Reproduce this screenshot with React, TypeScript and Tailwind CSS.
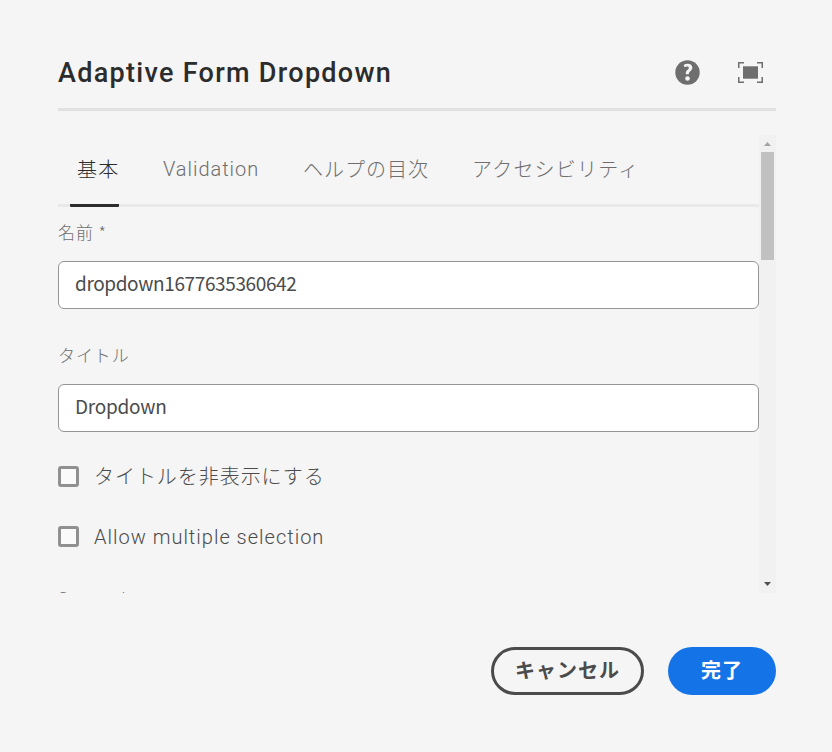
import React from 'react';

const jp = "font-['Noto_Sans_CJK_JP',sans-serif]";
const latin = "font-['Roboto','Noto_Sans_CJK_JP',sans-serif]";

function Tab({ children, className }: { children: React.ReactNode; className: string }) {
  return (
    <button className={`flex shrink-0 items-center whitespace-nowrap pb-[2px] text-[20px] font-light leading-[30px] ${className}`}>
      {children}
    </button>
  );
}

function TextField({ label, value, className }: { label: string; value: string; className: string }) {
  return (
    <div className="flex flex-col">
      <label className={`${jp} flex h-[27px] items-center whitespace-nowrap pb-[2px] text-[17px] font-light tracking-[0.9px] text-[#6e6e6e]`}>
        {label}
      </label>
      <div className={`${jp} mt-[15px] flex h-12 items-center rounded-[6px] border border-[#959595] bg-white pl-4 pb-1 text-[19px] text-[#4b4b4b]`}>
        <span className={className}>{value}</span>
      </div>
    </div>
  );
}

function Checkbox({ children, className }: { children: React.ReactNode; className: string }) {
  return (
    <label className="flex h-[21px] items-center">
      <span className="h-[21px] w-[21px] shrink-0 rounded-[3px] border-[3px] border-[#909090] bg-[#fafafa]" />
      <span className={`whitespace-nowrap text-[20px] font-light leading-[30px] text-[#4b4b4b] ${className}`}>{children}</span>
    </label>
  );
}

export default function App() {
  return (
    <main className="flex h-[752px] w-[832px] flex-col overflow-hidden bg-[#f5f5f5] pl-[58px] pr-14">
      <header className="flex h-[111px] shrink-0 items-center justify-between border-b-[3px] border-[#e1e1e1] pt-9">
        <h1 className={`${latin} whitespace-nowrap pt-[2px] text-[27px] font-medium leading-9 tracking-[1.29px] text-[#2c2c2c]`}>
          Adaptive Form Dropdown
        </h1>
        <div className="flex items-center gap-[38px] pr-[13px]">
          <svg width="25" height="25" viewBox="0 0 25 25" aria-label="Help">
            <circle cx="12.5" cy="12.5" r="12.2" fill="#6e6e6e" />
            <path d="M8.6 4.9C9.8 4.1 11.2 3.7 12.8 3.7c2.7 0 4.5 1.5 4.5 3.8 0 1.7-.8 2.7-2 3.7-1.1.9-1.5 1.5-1.4 3h-3c-.3-2 .2-3 1.4-4.1 1-.9 1.5-1.3 1.5-2.2 0-.9-.6-1.4-1.6-1.4-.9 0-1.8.3-2.6.8Z" fill="#f5f5f5" />
            <circle cx="12.5" cy="18.5" r="2.3" fill="#f5f5f5" />
          </svg>
          <svg width="25" height="21" viewBox="0 0 25 21" aria-label="Fullscreen">
            <path d="M.75 6V.75H6M19 .75h5.25V6M24.25 15v5.25H19M6 20.25H.75V15" fill="none" stroke="#6e6e6e" strokeWidth="1.5" />
            <path d="M5 4.3h15v12.4H5z" fill="#6e6e6e" />
          </svg>
        </div>
      </header>

      <section className="mt-6 flex h-[458px] shrink-0 overflow-hidden">
        <div className="flex w-[701px] flex-col">
          <nav className="flex h-[72px] shrink-0 border-b-[3px] border-[#e9e9e9]">
            <Tab className={`${jp} ml-3 h-[72px] w-[49px] rounded-b-[1px] border-b-[3px] border-[#2c2c2c] pl-[7px] tracking-[1.3px] text-[#2c2c2c]`}>基本</Tab>
            <Tab className={`${latin} ml-11 w-[97px] tracking-[0.95px] text-[#6e6e6e]`}>Validation</Tab>
            <Tab className={`${jp} ml-[43px] w-[126px] tracking-[1px] text-[#6e6e6e]`}>ヘルプの目次</Tab>
            <Tab className={`${jp} ml-[43px] tracking-[1.2px] text-[#6e6e6e]`}>アクセシビリティ</Tab>
          </nav>
          <div className="mt-3 flex shrink-0 flex-col gap-[33px]">
            <TextField label="名前 *" value="dropdown1677635360642" className="tracking-[-0.38px]" />
            <TextField label="タイトル" value="Dropdown" className="tracking-[-0.25px]" />
          </div>
          <div className="mt-[34px] flex shrink-0 flex-col gap-[39px]">
            <Checkbox className={`${jp} ml-[15px] pb-[2px] tracking-[0.95px]`}>タイトルを非表示にする</Checkbox>
            <Checkbox className={`${latin} ml-[15px] tracking-[1px]`}>Allow multiple selection</Checkbox>
          </div>
          <div className={`${latin} mt-[39px] h-6 shrink-0 text-[17px] font-light leading-6 tracking-[0.9px] text-[#6e6e6e]`}>Save value as</div>
        </div>
        <div className="flex w-[17px] shrink-0 flex-col items-center bg-[#f1f1f1]">
          <svg className="shrink-0" width="17" height="17" viewBox="0 0 17 17"><path d="M5 11h7L8.5 7Z" fill="#a3a3a3" /></svg>
          <div className="h-[108px] w-[13px] shrink-0 bg-[#c1c1c1]" />
          <svg className="mt-auto shrink-0" width="17" height="17" viewBox="0 0 17 17"><path d="M5 6h7l-3.5 4Z" fill="#505050" /></svg>
        </div>
      </section>

      <footer className={`${jp} mt-[54px] flex shrink-0 justify-end gap-6`}>
        <button className="flex h-12 w-[153px] items-center justify-center whitespace-nowrap rounded-full border-[3px] border-[#4b4b4b] pb-[2px] text-[20px] font-bold tracking-[1px] text-[#4b4b4b]">キャンセル</button>
        <button className="flex h-12 w-[108px] items-center justify-center whitespace-nowrap rounded-full bg-[#1473e6] pb-[2px] text-[20px] font-bold tracking-[1px] text-white">完了</button>
      </footer>
    </main>
  );
}
